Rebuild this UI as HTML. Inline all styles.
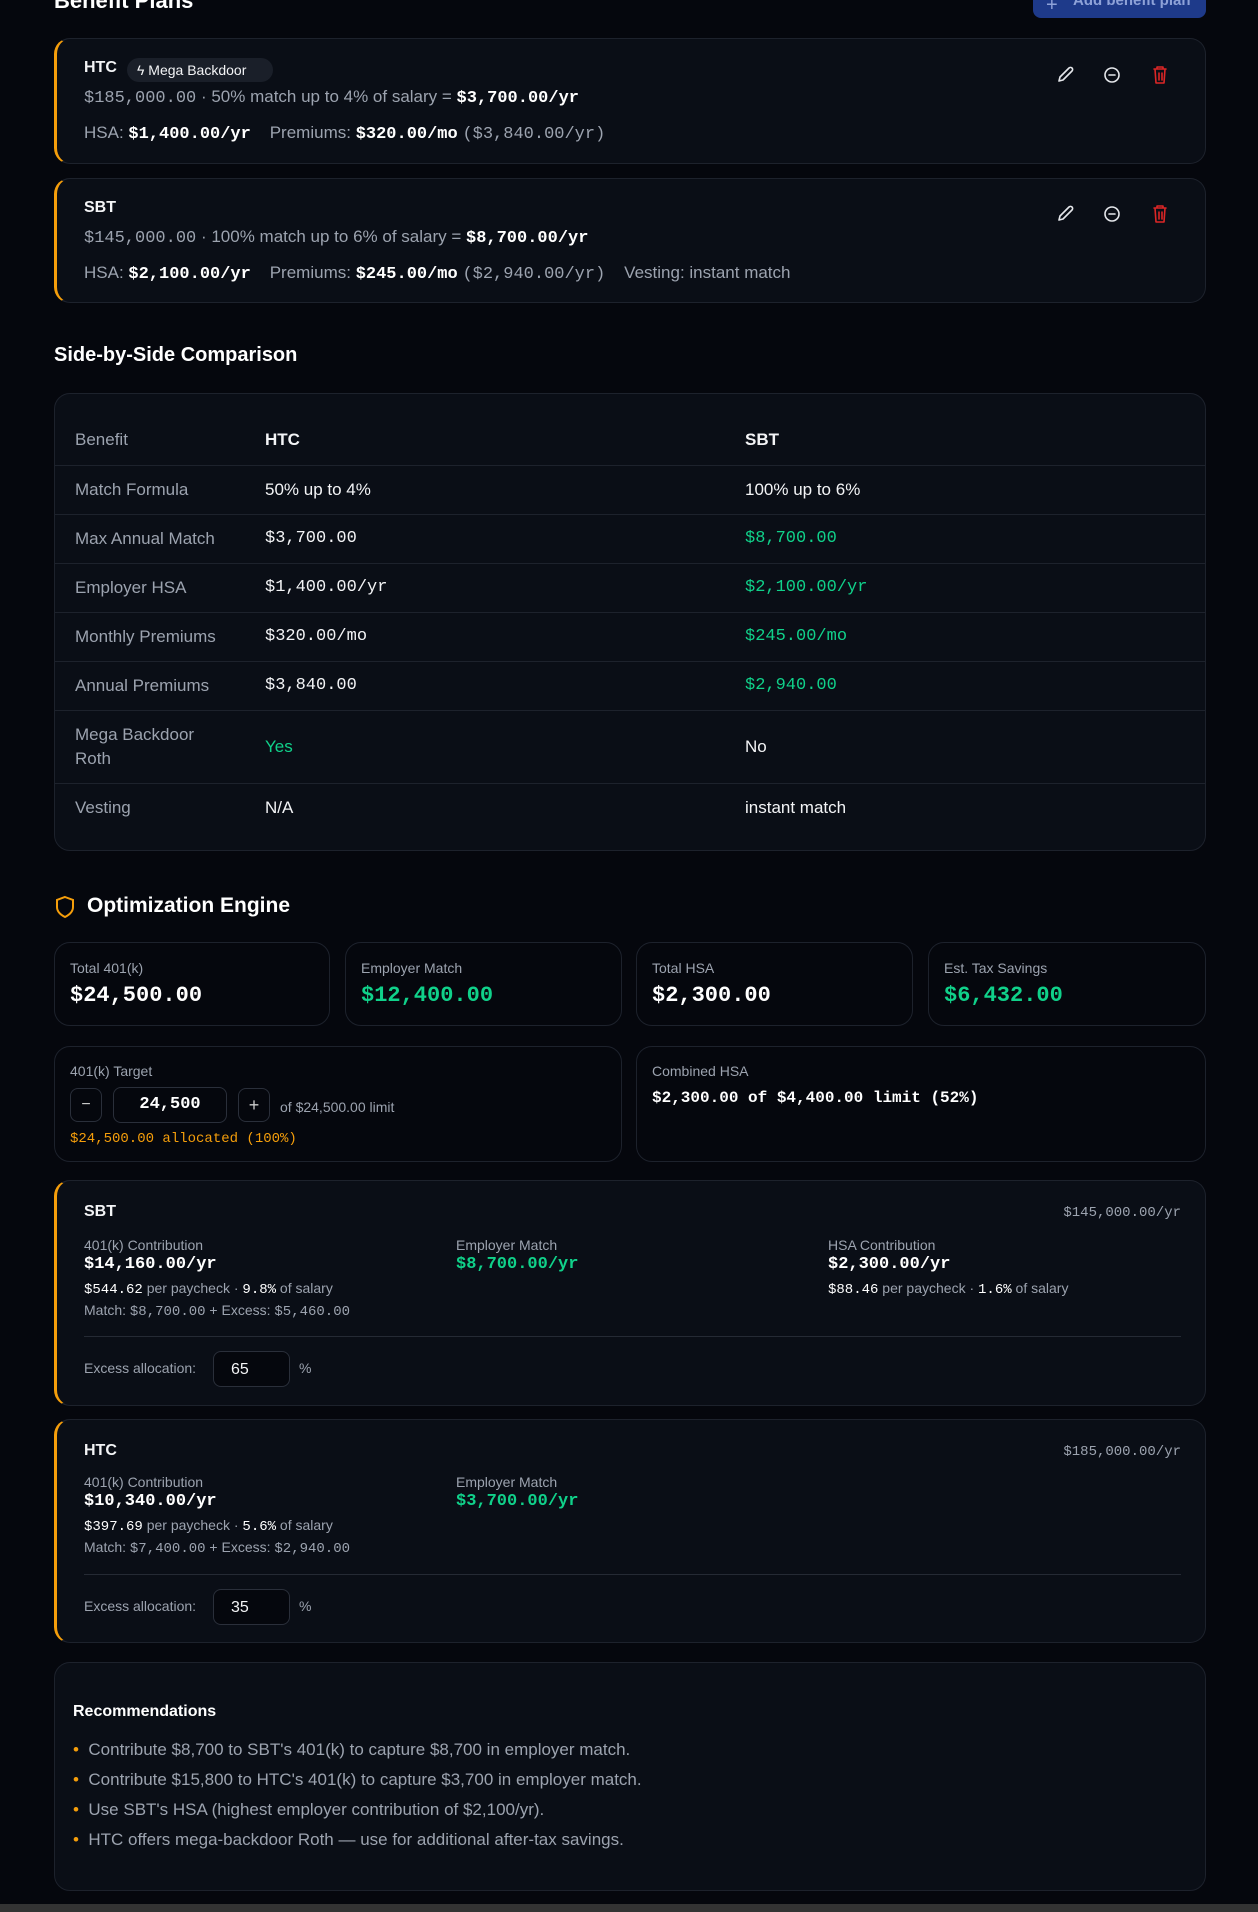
<!DOCTYPE html>
<html><head><meta charset="utf-8"><style>
*{box-sizing:border-box;margin:0;padding:0}
body{width:1258px;height:1912px;background:#05070d;color:#f3f4f6;font-family:"Liberation Sans",sans-serif;position:relative;overflow:hidden}
.a{position:absolute}
.card{position:absolute;background:#0a0e16;border:1px solid #1d222c;border-radius:16px}
.acc{border-left:3px solid #f59e0b}
.dk{background:#05070d}
.m{font-family:"Liberation Mono",monospace}
.g{color:#9ca3af}
.gr{color:#10d18a}
.w{color:#fff;font-weight:bold}
.t{font-size:17px}
.lbl{font-size:14px;color:#9ca3af}
table{border-collapse:collapse;width:100%}
td{height:49px;font-size:17px;border-top:1px solid #1d222c}
td:first-child{padding-left:20px;color:#9ca3af;width:210px}
td:nth-child(2){width:480px}
</style></head><body>
<div class="a w" style="left:54px;top:-12px;font-size:22px">Benefit Plans</div>
<div class="a" style="left:1033px;top:-20px;width:173px;height:38px;background:#1e3a8a;border-radius:8px;color:#8ea2d8;font-size:15px;padding:12px 0 0 40px;font-weight:bold">Add benefit plan</div>
<div class="a" style="left:1046px;top:-6px;color:#8ea2d8;font-size:20px">+</div>

<div class="card acc" style="left:54px;top:38px;width:1152px;height:126px">
 <div class="a" style="left:27px;top:20px;font-size:16px" ><b>HTC</b></div>
 <div class="a" style="left:70px;top:19px;height:24px;width:146px;background:#1a1f29;border-radius:12px;font-size:14px;padding:4px 10px 0 10px">ϟ Mega Backdoor</div>
 <div class="a t g" style="left:27px;top:48px"><span class="m">$185,000.00</span> · 50% match up to 4% of salary = <span class="m w">$3,700.00/yr</span></div>
 <div class="a t g" style="left:27px;top:84px">HSA: <span class="m w">$1,400.00/yr</span>&nbsp;&nbsp;&nbsp;&nbsp;Premiums: <span class="m w">$320.00/mo</span> <span class="m">($3,840.00/yr)</span></div>
</div>
<div class="card acc" style="left:54px;top:178px;width:1152px;height:125px">
 <div class="a" style="left:27px;top:20px;font-size:16px"><b>SBT</b></div>
 <div class="a t g" style="left:27px;top:48px"><span class="m">$145,000.00</span> · 100% match up to 6% of salary = <span class="m w">$8,700.00/yr</span></div>
 <div class="a t g" style="left:27px;top:84px">HSA: <span class="m w">$2,100.00/yr</span>&nbsp;&nbsp;&nbsp;&nbsp;Premiums: <span class="m w">$245.00/mo</span> <span class="m">($2,940.00/yr)</span>&nbsp;&nbsp;&nbsp;&nbsp;Vesting: instant match</div>
</div>
<svg class="a" style="left:1055px;top:65px" width="120" height="160" fill="none" stroke-width="1.6" stroke-linecap="round" stroke-linejoin="round">
 <g id="ic"><path d="M4 16 L5 12 L14 3 a2 2 0 0 1 3 3 L8 15 Z" stroke="#e5e7eb"/><circle cx="57" cy="10" r="7" stroke="#e5e7eb"/><path d="M54 10h6" stroke="#e5e7eb"/><path d="M99 4h12M102 4V2h6v2M100 4l1 14h8l1-14M104 8v7M107 8v7" stroke="#dc2626"/></g>
 <use href="#ic" y="139"/>
</svg>

<div class="a w" style="left:54px;top:344px;font-size:20px">Side-by-Side Comparison</div>
<div class="card" style="left:54px;top:393px;width:1152px;height:458px;padding-top:22px">
<table>
<tr><td style="border:0">Benefit</td><td style="border:0;font-weight:bold">HTC</td><td style="border:0;font-weight:bold">SBT</td></tr>
<tr><td>Match Formula</td><td>50% up to 4%</td><td>100% up to 6%</td></tr>
<tr><td>Max Annual Match</td><td class="m">$3,700.00</td><td class="m gr">$8,700.00</td></tr>
<tr><td>Employer HSA</td><td class="m">$1,400.00/yr</td><td class="m gr">$2,100.00/yr</td></tr>
<tr><td>Monthly Premiums</td><td class="m">$320.00/mo</td><td class="m gr">$245.00/mo</td></tr>
<tr><td>Annual Premiums</td><td class="m">$3,840.00</td><td class="m gr">$2,940.00</td></tr>
<tr><td style="height:73px;line-height:24px">Mega Backdoor<br>Roth</td><td class="gr">Yes</td><td>No</td></tr>
<tr><td style="height:50px">Vesting</td><td>N/A</td><td>instant match</td></tr>
</table></div>

<svg class="a" style="left:54px;top:895px" width="22" height="24" fill="none" stroke="#f59e0b" stroke-width="2"><path d="M11 2 L19 5 V12 C19 17 15 20 11 22 C7 20 3 17 3 12 V5 Z"/></svg>
<div class="a w" style="left:87px;top:894px;font-size:21px">Optimization Engine</div>

<div class="card dk" style="left:54px;top:942px;width:276px;height:84px"><div class="a lbl" style="left:15px;top:17px">Total 401(k)</div><div class="a m w" style="left:15px;top:40px;font-size:22px">$24,500.00</div></div>
<div class="card dk" style="left:345px;top:942px;width:277px;height:84px"><div class="a lbl" style="left:15px;top:17px">Employer Match</div><div class="a m gr" style="left:15px;top:40px;font-size:22px;font-weight:bold">$12,400.00</div></div>
<div class="card dk" style="left:636px;top:942px;width:277px;height:84px"><div class="a lbl" style="left:15px;top:17px">Total HSA</div><div class="a m w" style="left:15px;top:40px;font-size:22px">$2,300.00</div></div>
<div class="card dk" style="left:928px;top:942px;width:278px;height:84px"><div class="a lbl" style="left:15px;top:17px">Est. Tax Savings</div><div class="a m gr" style="left:15px;top:40px;font-size:22px;font-weight:bold">$6,432.00</div></div>

<div class="card dk" style="left:54px;top:1046px;width:568px;height:116px">
 <div class="a lbl" style="left:15px;top:16px">401(k) Target</div>
 <div class="a" style="left:15px;top:41px;width:32px;height:34px;border:1px solid #2a2f3a;border-radius:8px;text-align:center;line-height:32px;color:#ccc">−</div>
 <div class="a m w" style="left:58px;top:40px;width:114px;height:36px;border:1px solid #2a2f3a;border-radius:8px;text-align:center;line-height:34px;font-size:17px">24,500</div>
 <div class="a" style="left:183px;top:41px;width:32px;height:34px;border:1px solid #2a2f3a;border-radius:8px;text-align:center;line-height:32px;color:#ccc;font-size:18px">+</div>
 <div class="a lbl" style="left:225px;top:52px">of $24,500.00 limit</div>
 <div class="a m" style="left:15px;top:84px;font-size:14px;color:#f59e0b">$24,500.00 allocated (100%)</div>
</div>
<div class="card dk" style="left:636px;top:1046px;width:570px;height:116px">
 <div class="a lbl" style="left:15px;top:16px">Combined HSA</div>
 <div class="a m w" style="left:15px;top:42px;font-size:16px">$2,300.00 of $4,400.00 limit (52%)</div>
</div>

<div class="card acc" style="left:54px;top:1180px;width:1152px;height:226px">
 <div class="a" style="left:27px;top:22px;font-size:16px"><b>SBT</b></div>
 <div class="a m g" style="right:24px;top:24px;font-size:14px">$145,000.00/yr</div>
 <div class="a lbl" style="left:27px;top:56px">401(k) Contribution</div>
 <div class="a m w" style="left:27px;top:74px;font-size:17px">$14,160.00/yr</div>
 <div class="a lbl" style="left:27px;top:99px"><span class="m" style="color:#fff">$544.62</span> per paycheck · <span class="m" style="color:#fff">9.8%</span> of salary</div>
 <div class="a lbl" style="left:27px;top:121px">Match: <span class="m">$8,700.00</span> + Excess: <span class="m">$5,460.00</span></div>
 <div class="a lbl" style="left:399px;top:56px">Employer Match</div>
 <div class="a m gr" style="left:399px;top:74px;font-size:17px;font-weight:bold">$8,700.00/yr</div>
 <div class="a lbl" style="left:771px;top:56px">HSA Contribution</div>
 <div class="a m w" style="left:771px;top:74px;font-size:17px">$2,300.00/yr</div>
 <div class="a lbl" style="left:771px;top:99px"><span class="m" style="color:#fff">$88.46</span> per paycheck · <span class="m" style="color:#fff">1.6%</span> of salary</div>
 <div class="a" style="left:27px;right:24px;top:155px;border-top:1px solid #252a34"></div>
 <div class="a lbl" style="left:27px;top:179px">Excess allocation:</div>
 <div class="a" style="left:156px;top:170px;width:77px;height:36px;border:1px solid #2a2f3a;border-radius:8px;background:#05070d;padding:9px 0 0 17px;font-size:16px">65</div>
 <div class="a lbl" style="left:242px;top:179px">%</div>
</div>

<div class="card acc" style="left:54px;top:1419px;width:1152px;height:224px">
 <div class="a" style="left:27px;top:22px;font-size:16px"><b>HTC</b></div>
 <div class="a m g" style="right:24px;top:24px;font-size:14px">$185,000.00/yr</div>
 <div class="a lbl" style="left:27px;top:54px">401(k) Contribution</div>
 <div class="a m w" style="left:27px;top:72px;font-size:17px">$10,340.00/yr</div>
 <div class="a lbl" style="left:27px;top:97px"><span class="m" style="color:#fff">$397.69</span> per paycheck · <span class="m" style="color:#fff">5.6%</span> of salary</div>
 <div class="a lbl" style="left:27px;top:119px">Match: <span class="m">$7,400.00</span> + Excess: <span class="m">$2,940.00</span></div>
 <div class="a lbl" style="left:399px;top:54px">Employer Match</div>
 <div class="a m gr" style="left:399px;top:72px;font-size:17px;font-weight:bold">$3,700.00/yr</div>
 <div class="a" style="left:27px;right:24px;top:154px;border-top:1px solid #252a34"></div>
 <div class="a lbl" style="left:27px;top:178px">Excess allocation:</div>
 <div class="a" style="left:156px;top:169px;width:77px;height:36px;border:1px solid #2a2f3a;border-radius:8px;background:#05070d;padding:9px 0 0 17px;font-size:16px">35</div>
 <div class="a lbl" style="left:242px;top:178px">%</div>
</div>

<div class="card" style="left:54px;top:1662px;width:1152px;height:229px">
 <div class="a w" style="left:18px;top:40px;font-size:16px">Recommendations</div>
 <div class="a g" style="left:18px;top:72px;font-size:17px;line-height:30px">
  <div><span style="color:#f59e0b">•</span>&nbsp; Contribute $8,700 to SBT's 401(k) to capture $8,700 in employer match.</div>
  <div><span style="color:#f59e0b">•</span>&nbsp; Contribute $15,800 to HTC's 401(k) to capture $3,700 in employer match.</div>
  <div><span style="color:#f59e0b">•</span>&nbsp; Use SBT's HSA (highest employer contribution of $2,100/yr).</div>
  <div><span style="color:#f59e0b">•</span>&nbsp; HTC offers mega-backdoor Roth — use for additional after-tax savings.</div>
 </div>
</div>
<div class="a" style="left:0;top:1904px;width:1258px;height:8px;background:#333"></div>
</body></html>
